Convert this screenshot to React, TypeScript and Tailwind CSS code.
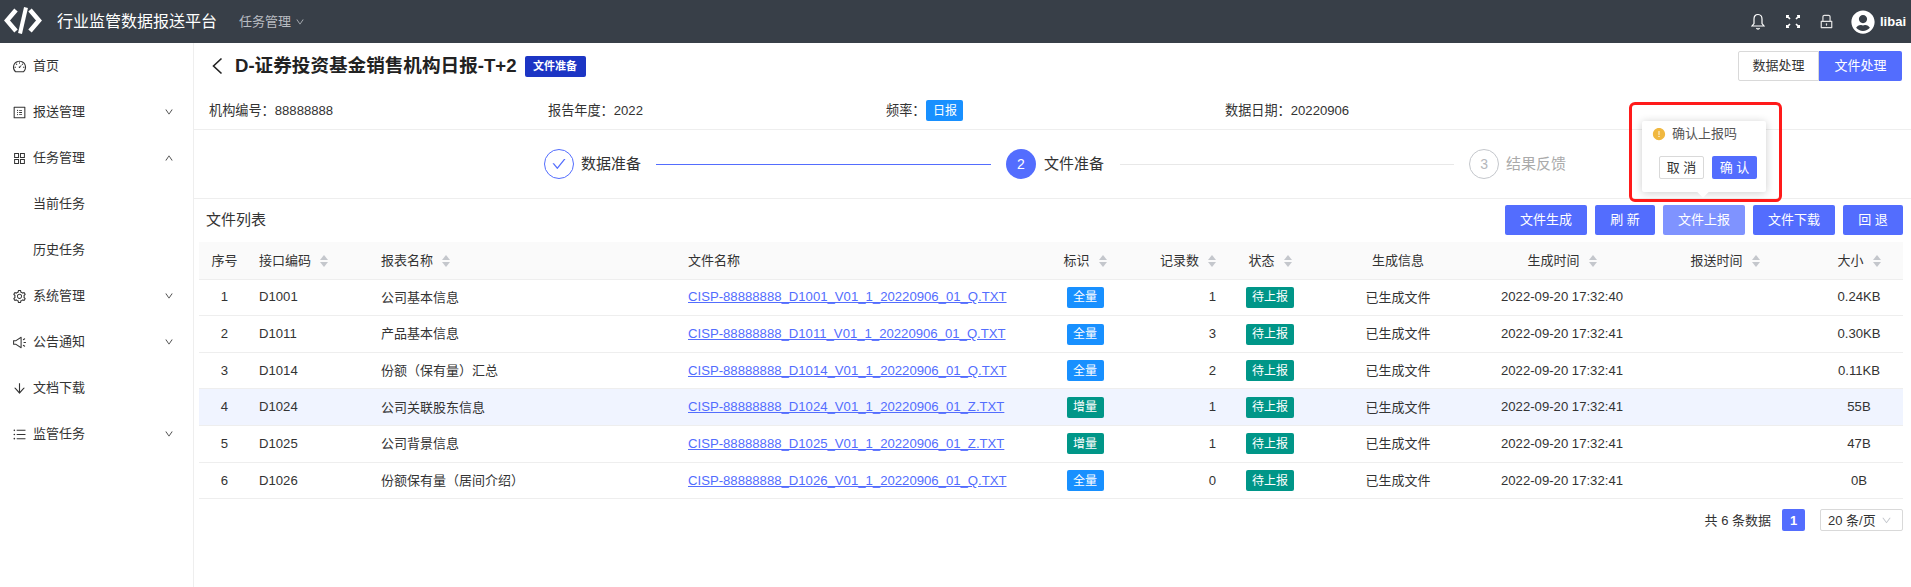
import {
  AiFillExclamationCircle,
  AiOutlineAppstore,
  AiOutlineArrowDown,
  AiOutlineBars,
  AiOutlineCheck,
  AiOutlineDashboard,
  AiOutlineDown,
  AiOutlineLock,
  AiOutlineProfile,
  AiOutlineSetting,
  AiOutlineSound,
  AiOutlineUp,
} from 'react-icons/ai';
import { FaUserCircle } from 'react-icons/fa';

const menu = [
  { label: '首页', icon: AiOutlineDashboard },
  { label: '报送管理', icon: AiOutlineProfile, arrow: 'down' },
  { label: '任务管理', icon: AiOutlineAppstore, arrow: 'up' },
  { label: '当前任务' },
  { label: '历史任务' },
  { label: '系统管理', icon: AiOutlineSetting, arrow: 'down' },
  { label: '公告通知', icon: AiOutlineSound, arrow: 'down' },
  { label: '文档下载', icon: AiOutlineArrowDown },
  { label: '监管任务', icon: AiOutlineBars, arrow: 'down' },
];

const rows = [
  { no: 1, code: 'D1001', name: '公司基本信息', file: 'CISP-88888888_D1001_V01_1_20220906_01_Q.TXT', flag: '全量', count: 1, time: '2022-09-20 17:32:40', size: '0.24KB' },
  { no: 2, code: 'D1011', name: '产品基本信息', file: 'CISP-88888888_D1011_V01_1_20220906_01_Q.TXT', flag: '全量', count: 3, time: '2022-09-20 17:32:41', size: '0.30KB' },
  { no: 3, code: 'D1014', name: '份额（保有量）汇总', file: 'CISP-88888888_D1014_V01_1_20220906_01_Q.TXT', flag: '全量', count: 2, time: '2022-09-20 17:32:41', size: '0.11KB' },
  { no: 4, code: 'D1024', name: '公司关联股东信息', file: 'CISP-88888888_D1024_V01_1_20220906_01_Z.TXT', flag: '增量', count: 1, time: '2022-09-20 17:32:41', size: '55B' },
  { no: 5, code: 'D1025', name: '公司背景信息', file: 'CISP-88888888_D1025_V01_1_20220906_01_Z.TXT', flag: '增量', count: 1, time: '2022-09-20 17:32:41', size: '47B' },
  { no: 6, code: 'D1026', name: '份额保有量（居间介绍）', file: 'CISP-88888888_D1026_V01_1_20220906_01_Q.TXT', flag: '全量', count: 0, time: '2022-09-20 17:32:41', size: '0B' },
];

const Sorter = () => (
  <span className="ml-[9px] inline-flex flex-col gap-[2px] align-middle">
    <span className="h-0 w-0 border-x-[4px] border-b-[5px] border-x-transparent border-b-[#c4c7cc]" />
    <span className="h-0 w-0 border-x-[4px] border-t-[5px] border-x-transparent border-t-[#c4c7cc]" />
  </span>
);

const ToolButton = ({ label, light, wide }: { label: string; light?: boolean; wide?: boolean }) => (
  <button className={`h-[30px] rounded-[2px] text-[13px] text-white ${wide ? 'w-[82px]' : 'w-[60px]'} ${light ? 'bg-[#7f93ff]' : 'bg-[#536dfe]'}`}>
    {label}
  </button>
);

const Tag = ({ label, color, width }: { label: string; color: string; width: string }) => (
  <span className={`inline-flex h-[21px] items-center justify-center rounded-[2px] align-middle text-[12px] text-white ${color} ${width}`}>
    {label}
  </span>
);

const App = () => {
  return (
    <div className="flex h-[587px] flex-col overflow-hidden bg-white text-[13.15px] text-[#333] font-['Liberation_Sans','Noto_Sans_CJK_SC',sans-serif]">
      <header className="flex h-[43px] shrink-0 items-center bg-[#383f48] pl-1 pr-[5px] text-white">
        <svg className="-mt-[3px]" width="38" height="27" viewBox="0 0 38 27" fill="none" stroke="white" strokeWidth="4.5">
          <path d="M12 3 3 13.5 12 24" />
          <path d="M26 3l9 10.5L26 24" />
          <path d="M22 0.5 16 26.5" strokeWidth="4" />
        </svg>
        <span className="ml-[15px] text-[16px]">行业监管数据报送平台</span>
        <span className="ml-[22px] flex items-center gap-[4px] text-[13px] text-[#b8bcc2]">
          任务管理
          <AiOutlineDown size={10} />
        </span>
        <div className="ml-auto flex items-center">
          <svg width="14" height="17" viewBox="0 0 14 17" fill="none" stroke="white" strokeWidth="1.2">
            <path d="M7 1.5C4.2 1.5 3 3.6 3 6v4.5L1 13h12l-2-2.5V6c0-2.4-1.2-4.5-4-4.5Z" />
            <path d="M5.5 15a1.6 1.6 0 0 0 3 0" />
          </svg>
          <svg className="ml-[21px]" width="14" height="13" viewBox="0 0 14 13" fill="none" stroke="white" strokeWidth="1.7">
            <path d="M1 1l3 3M3 0.5H.6V3M13 1l-3 3M11 0.5h2.4V3M1 12l3-3M3 12.5H.6V10M13 12l-3-3M11 12.5h2.4V10" />
          </svg>
          <AiOutlineLock className="ml-[18px] text-[#e4e4e4]" size={17} />
          <FaUserCircle className="ml-[16px]" size={24} />
          <span className="ml-[5px] text-[13px] font-bold">libai</span>
        </div>
      </header>

      <div className="flex min-h-0 flex-1">
        <aside className="w-[194px] shrink-0 border-r border-[#eeeeee]">
          {menu.map((item) => {
            const Icon = item.icon;
            return (
              <div key={item.label} className="flex h-[46px] items-center pl-[12px] pr-[19px]">
                <span className="flex w-[21px] items-center">{Icon && <Icon size={15} />}</span>
                <span className="text-[13px]">{item.label}</span>
                {item.arrow === 'down' && <AiOutlineDown className="ml-auto" size={10} />}
                {item.arrow === 'up' && <AiOutlineUp className="ml-auto" size={10} />}
              </div>
            );
          })}
        </aside>

        <main className="relative min-w-0 flex-1">
          <div className="flex h-[38px] items-end pl-[17px] pr-[9px]">
            <div className="flex h-[30px] flex-1 items-center">
              <svg width="12" height="18" viewBox="0 0 12 18" fill="none" stroke="#222" strokeWidth="1.6">
                <path d="M10.5 1.5 2.5 9l8 7.5" />
              </svg>
              <h1 className="ml-[12px] text-[18.6px] font-bold text-[#222]">D-证券投资基金销售机构日报-T+2</h1>
              <span className="ml-[8px] inline-flex h-[21px] w-[61px] items-center justify-center rounded-[2px] bg-[#1c35c4] text-[11px] font-bold text-white">文件准备</span>
            </div>
            <button className="h-[30px] w-[81px] rounded-l-[2px] border border-[#d9d9d9] text-[13px]">数据处理</button>
            <button className="h-[30px] w-[83px] rounded-r-[2px] bg-[#536dfe] text-[13px] text-white">文件处理</button>
          </div>

          <div className="flex h-[49px] items-center border-b border-[#eeeeee] pt-[11px] pl-[15px]">
            <span className="w-[339px]">机构编号：88888888</span>
            <span className="w-[338px]">报告年度：2022</span>
            <span className="flex w-[339px] items-center gap-[1px]">
              频率：
              <Tag label="日报" color="bg-[#1890ff]" width="w-[37px]" />
            </span>
            <span>数据日期：20220906</span>
          </div>

          <div className="flex h-[69px] items-center border-b border-[#eeeeee] pl-[350px]">
            <span className="flex h-[30px] w-[30px] items-center justify-center rounded-full border border-[#536dfe] text-[#536dfe]">
              <AiOutlineCheck size={16} />
            </span>
            <span className="ml-[7px] text-[15px]">数据准备</span>
            <span className="ml-[15px] h-px w-[335px] bg-[#536dfe]" />
            <span className="ml-[15px] flex h-[30px] w-[30px] items-center justify-center rounded-full bg-[#536dfe] text-[14px] text-white">2</span>
            <span className="ml-[8px] text-[15px]">文件准备</span>
            <span className="ml-[16px] h-px w-[334px] bg-[#e8e8e8]" />
            <span className="ml-[15px] flex h-[30px] w-[30px] items-center justify-center rounded-full border border-[#c4c7cc] text-[14px] text-[#b4b7bc]">3</span>
            <span className="ml-[7px] text-[15px] text-[#aaaaaa]">结果反馈</span>
          </div>

          <div className="mb-[7px] flex items-center pt-[6px] pl-[12px] pr-[8px]">
            <span className="flex-1 text-[15px]">文件列表</span>
            <div className="flex gap-[8px]">
              <ToolButton label="文件生成" wide />
              <ToolButton label="刷 新" />
              <ToolButton label="文件上报" light wide />
              <ToolButton label="文件下载" wide />
              <ToolButton label="回 退" />
            </div>
          </div>

          <div className="pl-[5px] pr-[8px]">
            <table className="w-[1704px] table-fixed border-collapse">
              <colgroup>
                <col className="w-[51px]" />
                <col className="w-[122px]" />
                <col className="w-[307px]" />
                <col className="w-[361px]" />
                <col className="w-[90px]" />
                <col className="w-[95px]" />
                <col className="w-[90px]" />
                <col className="w-[166px]" />
                <col className="w-[162px]" />
                <col className="w-[172px]" />
                <col className="w-[88px]" />
              </colgroup>
              <thead>
                <tr className="h-[37px] border-b border-[#eeeeee] bg-[#fafafa] text-[13px]">
                  <th className="text-center font-normal">序号</th>
                  <th className="pl-[9px] text-left font-normal">接口编码<Sorter /></th>
                  <th className="pl-[9px] text-left font-normal">报表名称<Sorter /></th>
                  <th className="pl-[9px] text-left font-normal">文件名称</th>
                  <th className="text-center font-normal">标识<Sorter /></th>
                  <th className="pr-[9px] text-right font-normal">记录数<Sorter /></th>
                  <th className="text-center font-normal">状态<Sorter /></th>
                  <th className="text-center font-normal">生成信息</th>
                  <th className="text-center font-normal">生成时间<Sorter /></th>
                  <th className="pr-[8px] text-center font-normal">报送时间<Sorter /></th>
                  <th className="text-center font-normal">大小<Sorter /></th>
                </tr>
              </thead>
              <tbody>
                {rows.map((row) => (
                  <tr key={row.no} className={`h-[36.67px] border-b border-[#eeeeee] ${row.no === 4 ? 'bg-[#f0f4ff]' : ''}`}>
                    <td className="text-center">{row.no}</td>
                    <td className="pl-[9px]">{row.code}</td>
                    <td className="pl-[9px] text-[13px]">{row.name}</td>
                    <td className="pl-[9px]"><a className="text-[#536dfe] underline">{row.file}</a></td>
                    <td className="text-center">
                      <Tag label={row.flag} color={row.flag === '全量' ? 'bg-[#1890ff]' : 'bg-[#009688]'} width="w-[37px]" />
                    </td>
                    <td className="pr-[9px] text-right">{row.count}</td>
                    <td className="text-center"><Tag label="待上报" color="bg-[#009688]" width="w-[48px]" /></td>
                    <td className="text-center text-[13px]">已生成文件</td>
                    <td className="text-center">{row.time}</td>
                    <td />
                    <td className="text-center">{row.size}</td>
                  </tr>
                ))}
              </tbody>
            </table>
          </div>

          <div className="mt-[10px] flex items-center justify-end pr-[8px] text-[13px]">
            <span>共 6 条数据</span>
            <span className="ml-[11px] flex h-[22px] w-[23px] items-center justify-center rounded-[2px] bg-[#536dfe] font-bold text-white">1</span>
            <span className="ml-[15px] flex h-[22px] w-[83px] items-center justify-between rounded-[2px] border border-[#d9d9d9] pl-[7px] pr-[10px]">
              20 条/页
              <AiOutlineDown className="text-[#c4c7cc]" size={11} />
            </span>
          </div>

          <div className="absolute top-[59px] left-[1435px] h-[100px] w-[153px] rounded-[6px] border-[3px] border-[#ff1a1a]" />
          <div className="absolute top-[78px] left-[1448px] h-[71px] w-[124px] rounded-[2px] bg-white pr-[9px] pl-[10px] text-[13px] shadow-[0_1px_8px_rgba(0,0,0,0.2)]">
            <div className="mt-[6px] flex h-[14px] items-center">
              <AiFillExclamationCircle className="text-[#f0b840]" size={14} />
              <span className="ml-[6px] text-[#555]">确认上报吗</span>
            </div>
            <div className="mt-[15px] flex justify-end gap-[8px]">
              <button className="h-[23px] w-[45px] rounded-[2px] border border-[#d9d9d9] text-[13px]">取 消</button>
              <button className="h-[23px] w-[45px] rounded-[2px] bg-[#536dfe] text-[13px] text-white">确 认</button>
            </div>
            <span className="absolute -bottom-[4px] left-[57px] h-[8px] w-[8px] rotate-45 bg-white" />
          </div>
        </main>
      </div>
    </div>
  );
};

export default App;
